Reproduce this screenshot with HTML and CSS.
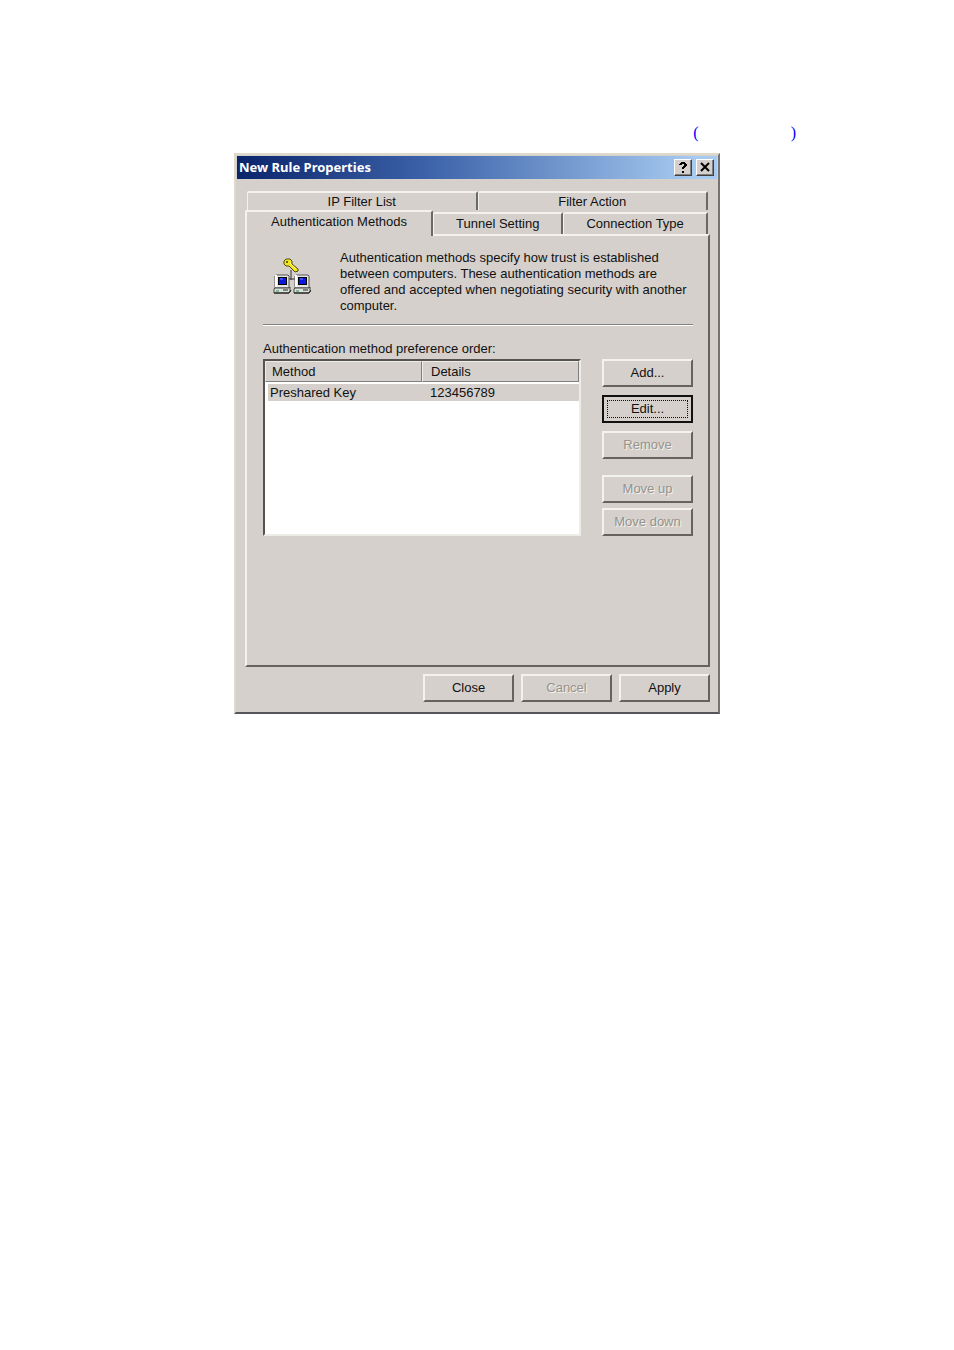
FILE: index.html
```html
<!DOCTYPE html>
<html lang="en">
<head>
    <meta charset="UTF-8">
    <meta name="viewport" content="width=device-width, initial-scale=1.0">
    <title>New Rule Properties</title>
    <link rel="stylesheet" href="styles.css">
</head>
<body>

<main class="page">
    <p class="caption"><span>(</span><span>)</span></p>

    <section class="dialog" aria-labelledby="dialogTitle">
        <header class="titlebar">
            <h1 id="dialogTitle">New Rule Properties</h1>
            <button class="title-btn" aria-label="Help">
                <svg width="10" height="11" viewBox="0 0 10 11"><path d="M1 3V2h1V1h1V0h4v1h1v1h1v2H8v1H7v1H6v1H4V5h1V4h1V2H4v1zM4 9h2v2H4z"/></svg>
            </button>
            <button class="title-btn" aria-label="Close window">
                <svg width="10" height="10" viewBox="0 0 10 10"><path d="M1 1l8 8M9 1l-8 8" stroke="#000" stroke-width="2"/></svg>
            </button>
        </header>

        <div class="content">
            <div class="tabs" role="tablist">
                <div class="tab-row back">
                    <button class="tab" role="tab">IP Filter List</button>
                    <button class="tab" role="tab">Filter Action</button>
                </div>
                <div class="tab-row front">
                    <button class="tab active" role="tab" aria-selected="true">Authentication Methods</button>
                    <button class="tab" role="tab">Tunnel Setting</button>
                    <button class="tab" role="tab">Connection Type</button>
                </div>
            </div>

            <div class="panel" role="tabpanel">
                <div class="intro">
                    <!-- two computers joined by a key -->
                    <svg class="intro-icon" width="38" height="37" viewBox="0 0 38 37">
                        <path d="M18 12v10M15 21h7" stroke="#333" fill="none"/>
                        <path d="M13 1h4l2 2v3l6 5v2l-3 1-6-6h-3l-2-2V3z" fill="#f4e61c" stroke="#4d4a10"/>
                        <path d="M13 3h2v2h-2z" fill="#6d6818"/>
                        <path d="M17 5l6 6" stroke="#fff98a"/>
                        <g id="computer">
                            <path d="M3 17h12l1 1v12H2V18z" fill="#e8e6e0" stroke="#555"/>
                            <path d="M2 17h2v12H2z" fill="#fff"/>
                            <path d="M5 19h9v8H5z" fill="#000"/>
                            <path d="M6 20h7v6H6z" fill="#0a18e0"/>
                            <path d="M7 20h3v2H7z" fill="#3a4cff"/>
                            <path d="M2 30h14l1-1v5l-1 1H1v-4z" fill="#dce0da" stroke="#444"/>
                            <path d="M3 33h3" stroke="#259045"/>
                            <path d="M10 32h5" stroke="#222"/>
                            <path d="M1 35h15l2-3" stroke="#111" fill="none"/>
                        </g>
                        <use href="#computer" x="20"/>
                    </svg>
                    <p>Authentication methods specify how trust is established between computers. These authentication methods are offered and accepted when negotiating security with another computer.</p>
                </div>

                <hr>

                <h2 id="listLabel">Authentication method preference order:</h2>
                <div class="methods">
                    <div class="list">
                        <table aria-labelledby="listLabel">
                            <thead>
                                <tr><th>Method</th><th>Details</th></tr>
                            </thead>
                            <tbody>
                                <tr><td>Preshared Key</td><td>123456789</td></tr>
                            </tbody>
                        </table>
                    </div>
                    <div class="actions">
                        <button class="btn">Add...</button>
                        <button class="btn default">Edit...</button>
                        <button class="btn" disabled>Remove</button>
                        <div class="move">
                            <button class="btn" disabled>Move up</button>
                            <button class="btn" disabled>Move down</button>
                        </div>
                    </div>
                </div>
            </div>

            <footer class="buttons">
                <button class="btn">Close</button>
                <button class="btn" disabled>Cancel</button>
                <button class="btn">Apply</button>
            </footer>
        </div>
    </section>
</main>

</body>
</html>
```
FILE: styles.css
```css
* {
    box-sizing: border-box;
}

body {
    margin: 0;
    background-color: #fff;
    color: #111;
    font-family: "Liberation Sans", Arial, sans-serif;
    font-size: 13px;
    line-height: 16px;
}

button {
    font: inherit;
    color: inherit;
    padding: 0;
    background-color: #d5d0cb;
}

.page {
    max-width: 640px;
    margin: 0 auto;
    padding-top: 124px;
}

.caption {
    display: flex;
    justify-content: flex-end;
    gap: 92px;
    margin: 0 0 11px;
    padding-right: 1px;
    color: #00f;
    font-family: "Liberation Serif", serif;
    font-size: 16px;
    line-height: 18px;
}

.dialog {
    max-width: 486px;
    margin: 0 auto;
    padding: 1px;
    background-color: #d5d0cb;
    border: 2px solid;
    border-color: #dedacb #757270 #55565a #dedacb;
}

/* Title bar */
.titlebar {
    display: flex;
    align-items: center;
    gap: 4px;
    height: 23px;
    padding: 0 3px 1px 2px;
    background: linear-gradient(to right, #0a246a, #3d63aa 40%, #a6caf0 95%);
}

.titlebar h1 {
    flex: 1;
    margin: 0;
    color: #fff;
    font-family: "Noto Sans", sans-serif;
    font-size: 13px;
    font-weight: bold;
}

.title-btn {
    display: flex;
    align-items: center;
    justify-content: center;
    width: 18px;
    height: 17px;
    border: 1px solid;
    border-color: #fff #404040 #404040 #fff;
    box-shadow: inset -1px -1px #808080;
}

/* Tabs */
.content {
    padding: 12px 7px 9px 8px;
}

.tab-row {
    display: grid;
}

.tab-row.back {
    grid-template-columns: 1fr 1fr;
    margin: 0 2px;
}

.tab-row.front {
    grid-template-columns: 13fr 9fr 10fr;
    align-items: end;
    margin-right: 2px;
}

.tab {
    height: 22px;
    border: 2px solid;
    border-color: #f4f2ec #6b6865 transparent #f4f2ec;
    border-bottom: 0;
    border-left-width: 1px;
    border-radius: 2px 2px 0 0;
}

.back .tab {
    height: 19px;
}

.tab.active {
    z-index: 1;
    height: 26px;
    margin-bottom: -2px;
    padding-bottom: 4px;
    border-left-width: 2px;
}

.panel {
    min-height: 433px;
    padding: 14px 15px 0 16px;
    border: 2px solid;
    border-color: #f4f2ec #65625f #65625f #f4f2ec;
}

.intro {
    display: flex;
    gap: 29px;
    padding: 0 4px 0 10px;
}

.intro-icon {
    flex: none;
    margin-top: 8px;
}

.intro p {
    margin: 0;
}

hr {
    margin: 10px 0 15px;
    border: 0;
    border-top: 1px solid #808080;
    border-bottom: 1px solid #fff;
}

h2 {
    margin: 0 0 2px;
    font-size: 13px;
    font-weight: normal;
}

.methods {
    display: flex;
    gap: 21px;
}

.list {
    flex: 1;
    background-color: #fff;
    border: 2px solid;
    border-color: #55524f #eeece6 #eeece6 #55524f;
}

table {
    width: 100%;
    border-collapse: separate;
    border-spacing: 0;
    table-layout: fixed;
}

th,
td {
    padding: 0 8px;
    text-align: left;
    font-weight: normal;
}

th {
    height: 21px;
    background-color: #d5d0cb;
    border: 1px solid;
    border-color: #eeece6 #808080 #808080 #eeece6;
}

th:first-child {
    padding-left: 6px;
}

td {
    height: 19px;
    background-color: #d5d0cb;
    border-top: 2px solid #fff;
}

td:first-child {
    padding-left: 2px;
    border-left: 3px solid #fff;
}

/* Push buttons */
.btn {
    width: 91px;
    height: 28px;
    border: 2px solid;
    border-color: #f4f2ec #65625f #65625f #f4f2ec;
}

.btn.default {
    border-color: #111;
    outline: 1px dotted #111;
    outline-offset: -6px;
}

.btn:disabled {
    color: #96928e;
    text-shadow: 1px 1px #f4f2ec;
}

.actions {
    display: flex;
    flex-direction: column;
    gap: 8px;
}

.move {
    display: flex;
    flex-direction: column;
    gap: 5px;
    margin-top: 8px;
}

.buttons {
    display: flex;
    justify-content: flex-end;
    gap: 7px;
    margin-top: 7px;
}
```
